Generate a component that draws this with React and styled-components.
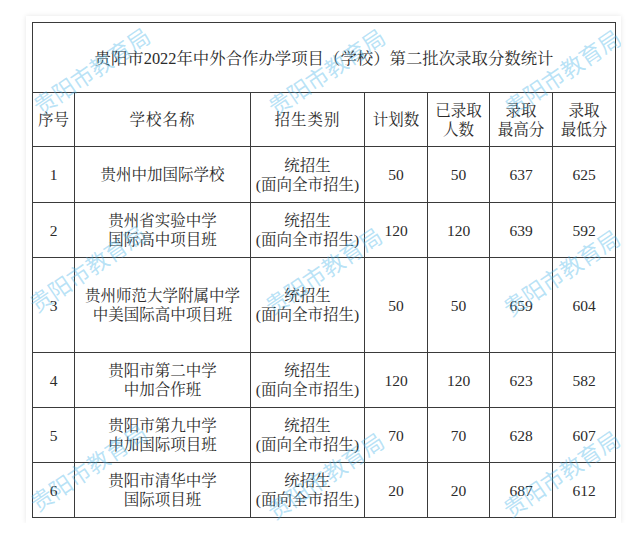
import styled, { createGlobalStyle } from "styled-components";

const GlobalStyle = createGlobalStyle`
  html, body {
    margin: 0;
    padding: 0;
    background: #ffffff;
  }
  body {
    font-family: "Liberation Serif", "Noto Serif CJK SC", "Noto Sans CJK SC", serif;
  }
`;

const rows = [
  { no: "1", school: ["贵州中加国际学校"], plan: "50", admitted: "50", high: "637", low: "625", h: 56 },
  { no: "2", school: ["贵州省实验中学", "国际高中项目班"], plan: "120", admitted: "120", high: "639", low: "592", h: 55 },
  { no: "3", school: ["贵州师范大学附属中学", "中美国际高中项目班"], plan: "50", admitted: "50", high: "659", low: "604", h: 95 },
  { no: "4", school: ["贵阳市第二中学", "中加合作班"], plan: "120", admitted: "120", high: "623", low: "582", h: 55 },
  { no: "5", school: ["贵阳市第九中学", "中加国际项目班"], plan: "70", admitted: "70", high: "628", low: "607", h: 55 },
  { no: "6", school: ["贵阳市清华中学", "国际项目班"], plan: "20", admitted: "20", high: "687", low: "612", h: 55 },
];

// watermark centres, relative to the card
const marks = [
  [65, 54], [300, 55], [536, 56],
  [61, 252], [297, 254], [535, 256],
  [62, 451], [299, 459], [535, 457],
];

export default function App() {
  return (
    <>
      <GlobalStyle />
      <Card>
        <Table>
          <colgroup>
            <col style={{ width: 42 }} />
            <col style={{ width: 176 }} />
            <col style={{ width: 114 }} />
            <col style={{ width: 63 }} />
            <col style={{ width: 62 }} />
            <col style={{ width: 63 }} />
            <col style={{ width: 63 }} />
          </colgroup>
          <tbody>
            <Row $h={70}>
              <TitleCell colSpan={7}>贵阳市2022年中外合作办学项目（学校）第二批次录取分数统计</TitleCell>
            </Row>
            <Row $h={54}>
              <Cell>序号</Cell>
              <Cell $spaced>学校名称</Cell>
              <Cell $spaced>招生类别</Cell>
              <Cell>计划数</Cell>
              <Cell>已录取<br />人数</Cell>
              <Cell>录取<br />最高分</Cell>
              <Cell>录取<br />最低分</Cell>
            </Row>
            {rows.map((r) => (
              <Row key={r.no} $h={r.h}>
                <Cell>{r.no}</Cell>
                <Cell>
                  {r.school.map((line, i) => (
                    <Line key={i}>{line}</Line>
                  ))}
                </Cell>
                <Cell>
                  <Line>统招生</Line>
                  <Line>(面向全市招生)</Line>
                </Cell>
                <Cell>{r.plan}</Cell>
                <Cell>{r.admitted}</Cell>
                <Cell>{r.high}</Cell>
                <Cell>{r.low}</Cell>
              </Row>
            ))}
          </tbody>
        </Table>
        {marks.map(([x, y], i) => (
          <Watermark key={i} style={{ left: x, top: y }}>
            贵阳市教育局
          </Watermark>
        ))}
      </Card>
    </>
  );
}

const Card = styled.div`
  position: relative;
  overflow: hidden;
  box-sizing: border-box;
  width: 595px;
  height: 507px;
  margin: 16px 0 0 26px;
  padding: 6px 5px 6px 6px;
  background: #ffffff;
  box-shadow: 0 0 5px rgba(0, 0, 0, 0.1);
`;

const Table = styled.table`
  width: 584px;
  table-layout: fixed;
  border-collapse: collapse;
  color: #2b2b2b;
  font-family: "Liberation Serif", "Noto Serif CJK SC", "Noto Sans CJK SC", serif;
  font-size: 15.5px;
  line-height: 19px;
`;

const Row = styled.tr`
  height: ${(p) => p.$h}px;
`;

const Cell = styled.td`
  border: 1px solid #3a3a3a;
  padding: 0;
  text-align: center;
  vertical-align: middle;
  letter-spacing: ${(p) => (p.$spaced ? "1px" : "0")};
`;

const TitleCell = styled(Cell)`
  font-size: 16.4px;
  padding-top: 2px;
`;

const Line = styled.div`
  white-space: nowrap;
`;

const Watermark = styled.span`
  position: absolute;
  transform: translate(-50%, -50%) rotate(-34deg);
  font-family: "Noto Sans CJK SC", sans-serif;
  font-weight: 400;
  font-size: 22.5px;
  line-height: 1;
  white-space: nowrap;
  color: rgba(70, 180, 232, 0.38);
  pointer-events: none;
`;
